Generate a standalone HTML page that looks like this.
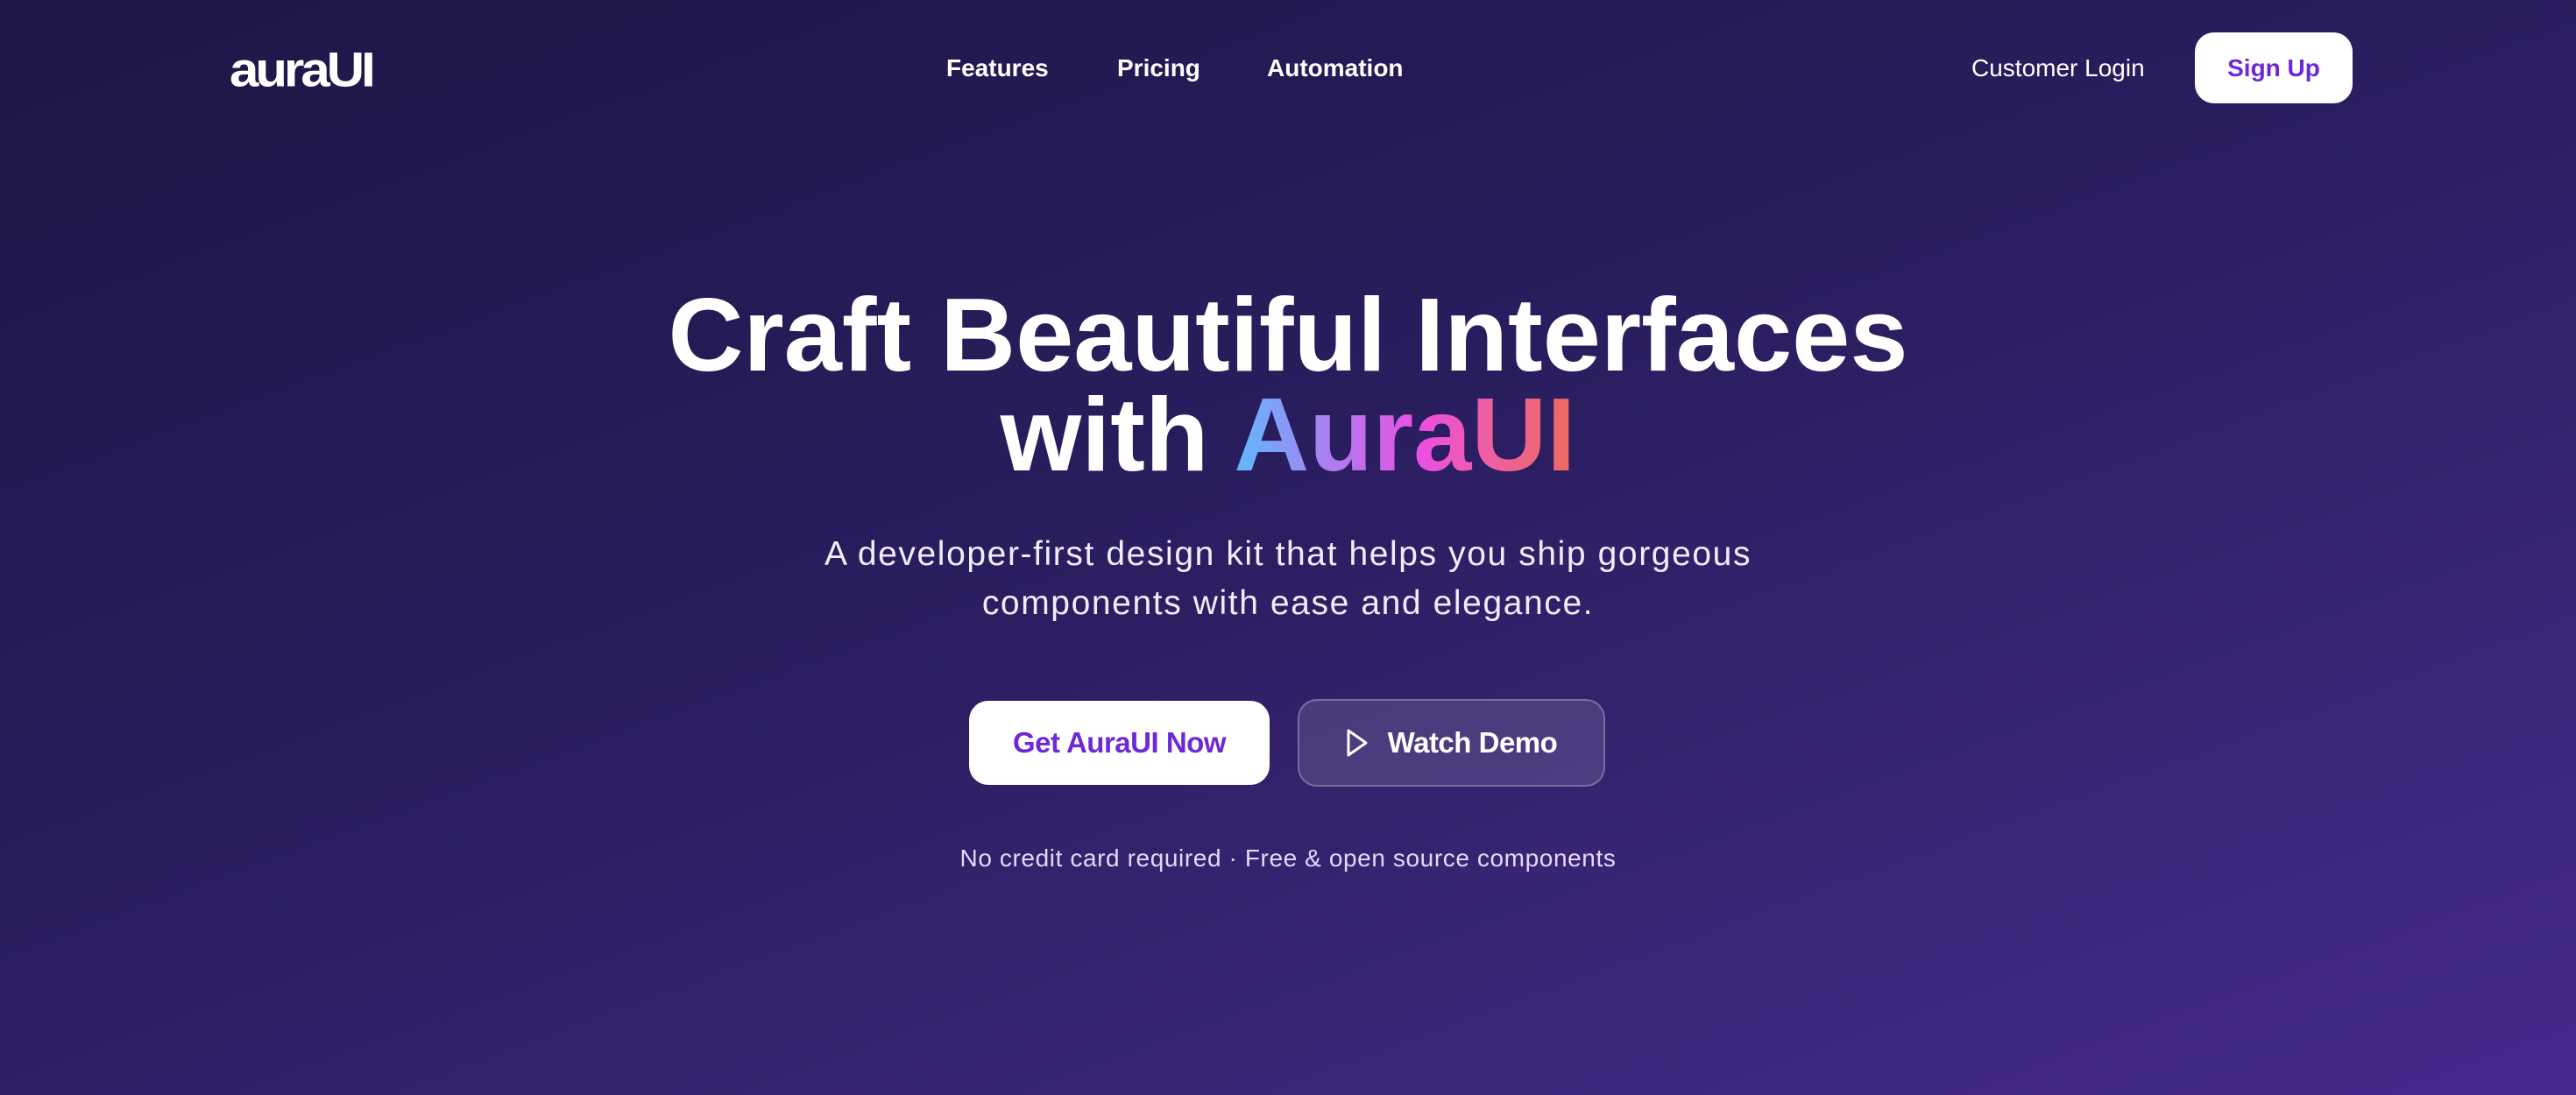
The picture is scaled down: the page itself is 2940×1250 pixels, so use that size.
<!DOCTYPE html>
<html><head><meta charset="utf-8"><style>
*{margin:0;padding:0;box-sizing:border-box}
body{width:2940px;height:1250px;overflow:hidden;font-family:"Liberation Sans",sans-serif;color:#fff;
background:linear-gradient(160deg,#1e1646 0%,#2a1d5e 45%,#3a2577 75%,#46298c 100%);position:relative}
.abs{position:absolute;white-space:nowrap}
.logo{left:262px;top:48px;font-size:60px;font-weight:700;letter-spacing:-4px;transform:scale(1.0,0.92);transform-origin:left top}
.nav{top:62px;font-size:28px;font-weight:700}
.signup{left:2505px;top:37px;width:180px;height:81px;background:#fff;border-radius:22px;color:#6d28d9;font-size:28px;font-weight:700;display:flex;align-items:center;justify-content:center}
h1{position:absolute;left:0;width:2940px;text-align:center;font-size:119px;font-weight:700;letter-spacing:0px;line-height:114px;top:326px}
.grad{background:linear-gradient(90deg,#5fb9fc 0%,#b07af0 30%,#ec4fe0 55%,#ed5fa0 75%,#ee6b5c 100%);-webkit-background-clip:text;background-clip:text;color:transparent}
.sub{left:0;width:2940px;text-align:center;top:605px;font-size:39px;line-height:56px;color:#f1ecfb;letter-spacing:1.6px}
.b1{left:1106px;top:800px;width:343px;height:96px;background:#fff;border-radius:22px;color:#6d28d9;font-size:33px;font-weight:700;display:flex;align-items:center;justify-content:center;letter-spacing:-0.5px}
.b2{left:1481px;top:798px;width:351px;height:100px;background:rgba(255,255,255,0.12);border:2px solid rgba(255,255,255,0.25);border-radius:22px;font-size:33px;font-weight:700;display:flex;align-items:center;justify-content:center;gap:22px;letter-spacing:-0.5px}
.foot{left:0;width:2940px;text-align:center;top:964px;font-size:28px;color:#e3d8f8;letter-spacing:0.6px}
</style></head><body>
<div class="abs logo">auraUI</div>
<div class="abs nav" style="left:1080px">Features</div>
<div class="abs nav" style="left:1275px">Pricing</div>
<div class="abs nav" style="left:1446px">Automation</div>
<div class="abs nav" style="left:2250px;font-weight:400">Customer Login</div>
<div class="abs signup">Sign Up</div>
<h1>Craft Beautiful Interfaces<br>with <span class="grad">AuraUI</span></h1>
<div class="abs sub">A developer-first design kit that helps you ship gorgeous<br>components with ease and elegance.</div>
<div class="abs b1">Get AuraUI Now</div>
<div class="abs b2"><svg width="26" height="34" viewBox="0 0 26 34"><path d="M3 3 L23 17 L3 31 Z" fill="none" stroke="#fff" stroke-width="3" stroke-linejoin="round"/></svg>Watch Demo</div>
<div class="abs foot">No credit card required · Free &amp; open source components</div>
</body></html>
